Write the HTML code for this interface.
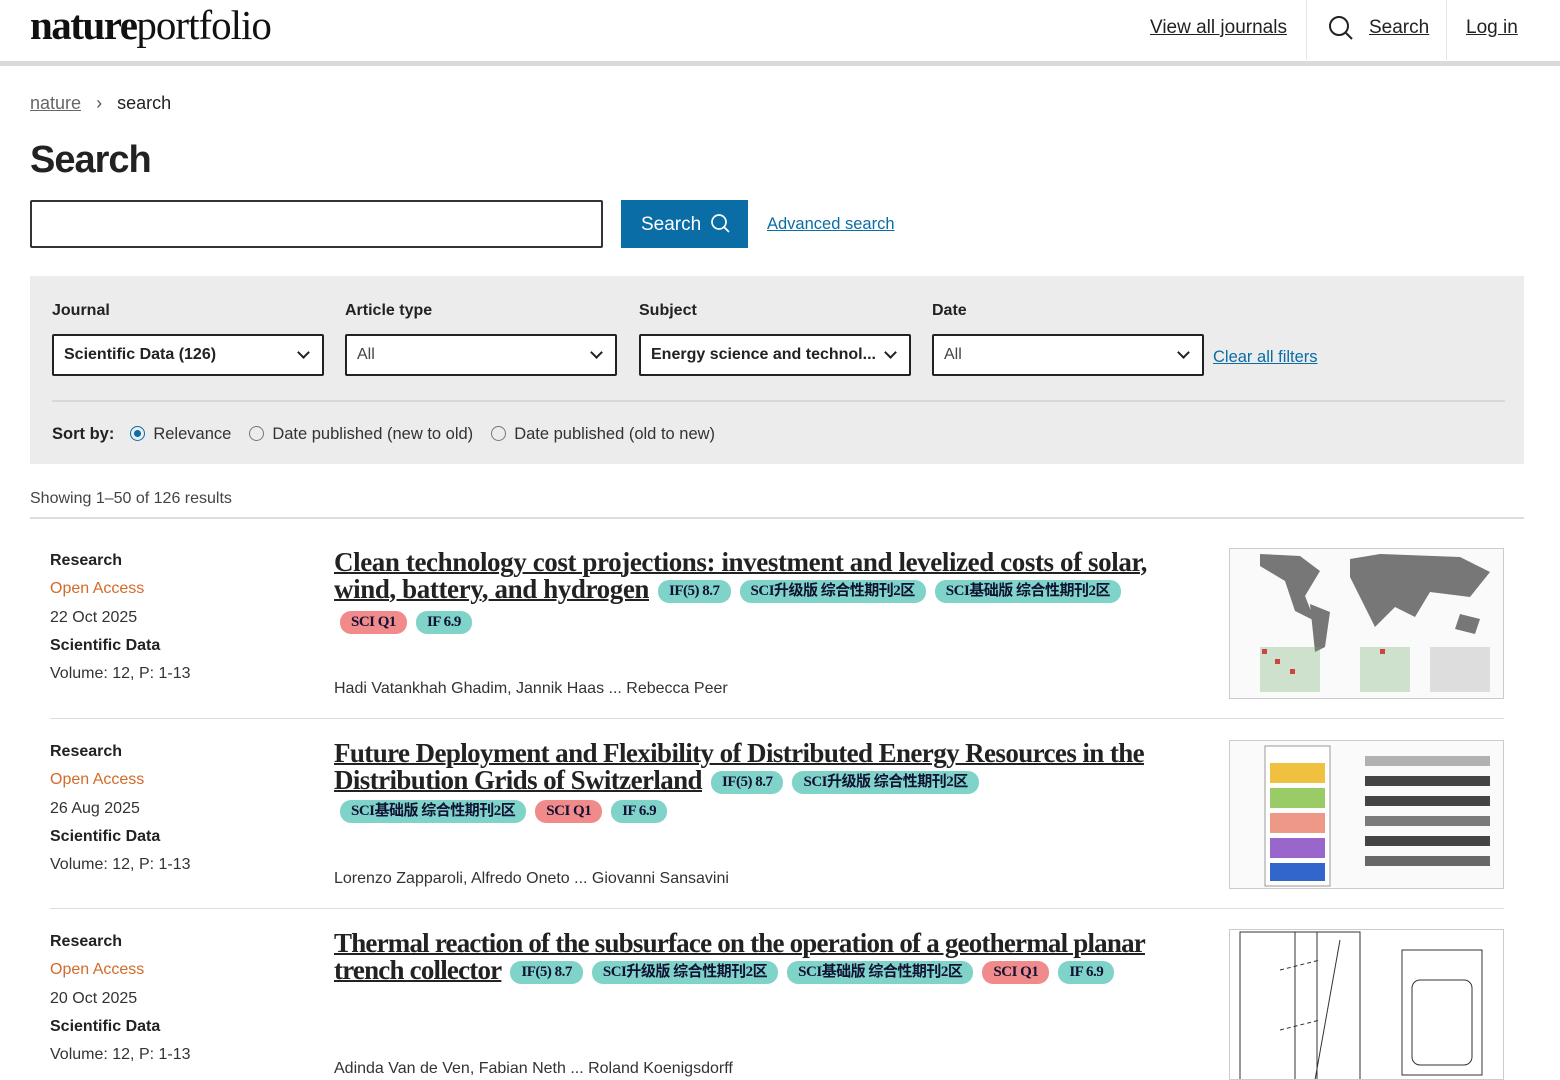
<!DOCTYPE html>
<html><head><meta charset="utf-8"><style>
*{margin:0;padding:0;box-sizing:border-box}
body{width:1560px;height:1080px;overflow:hidden;background:#fff;font-family:"Liberation Sans","Noto Sans CJK SC",sans-serif;color:#222;position:relative}
.a{position:absolute}
.hdr{height:66px;border-bottom:5px solid #dadada;top:0;left:0;width:1560px}
.logo{left:30px;top:1px;font-family:"Liberation Serif",serif;font-size:41px;letter-spacing:-1px;color:#111}
.nav{font-size:19px;color:#222;text-decoration:underline;top:17px}
.sel{height:42px;border:2px solid #222;border-radius:2px;background:#fff;font-size:16px;padding:10px 10px;top:334px}
.sel:after{content:"";position:absolute;right:14px;top:12px;width:7px;height:7px;border-right:2px solid #222;border-bottom:2px solid #222;transform:rotate(45deg)}
.lab{font-size:16px;font-weight:bold;top:302px}
.t{font-family:"Liberation Serif",serif;font-weight:bold;font-size:27px;letter-spacing:-0.4px;line-height:27px;color:#222;text-decoration:underline;text-decoration-thickness:2px;left:334px;width:830px}
.b{display:inline-block;font-family:"Liberation Serif","Noto Sans CJK SC",serif;font-weight:bold;font-size:15px;letter-spacing:-0.5px;padding:2px 11px;border-radius:11px;background:#7fd3c8;color:#113;text-decoration:none;vertical-align:3px;margin-left:9px;line-height:19px}
.r{background:#f18b8b}
.meta{left:50px;font-size:16px;line-height:28.3px;color:#333}
.meta b{color:#222}
.meta .oa{color:#d36a2a}
.au{left:334px;font-size:16px;color:#333}
.thumb{left:1229px;width:275px;border:1px solid #ccc;background:#fafafa;overflow:hidden}
.sep{left:50px;width:1454px;height:1px;background:#ddd}
.radio{display:inline-block;width:15px;height:15px;border:1px solid #777;border-radius:50%;vertical-align:-2px;margin-right:8px;position:relative}
</style></head><body>
<div class="a hdr"></div>
<div class="a logo"><b style="letter-spacing:-1.5px">nature</b>portfolio</div>
<div class="a nav" style="left:1150px">View all journals</div>
<div class="a" style="left:1306px;top:0;width:1px;height:60px;background:#e5e5e5"></div>
<svg class="a" style="left:1328px;top:15px" width="26" height="26" viewBox="0 0 26 26"><circle cx="11" cy="11" r="9" fill="none" stroke="#222" stroke-width="2"/><path d="M18 18l6 6" stroke="#222" stroke-width="2"/></svg>
<div class="a nav" style="left:1369px">Search</div>
<div class="a" style="left:1446px;top:0;width:1px;height:60px;background:#e5e5e5"></div>
<div class="a nav" style="left:1466px">Log in</div>
<div class="a" style="left:30px;top:93px;font-size:18px"><span style="color:#666;text-decoration:underline">nature</span> <span style="margin:0 10px;color:#555">›</span> search</div>
<div class="a" style="left:30px;top:139px;font-size:38px;font-weight:bold;letter-spacing:-1px">Search</div>
<div class="a" style="left:30px;top:200px;width:573px;height:48px;border:2px solid #333;border-radius:2px"></div>
<div class="a" style="left:621px;top:200px;width:127px;height:48px;background:#0a6da5;color:#fff;font-size:19px;padding:13px 0 0 20px">Search <svg width="20" height="20" viewBox="0 0 20 20" style="vertical-align:-3px;margin-left:4px"><circle cx="9" cy="9" r="7" fill="none" stroke="#fff" stroke-width="1.7"/><path d="M14 14l5 5" stroke="#fff" stroke-width="1.7"/></svg></div>
<div class="a" style="left:767px;top:215px;font-size:16.5px;color:#0a6da5;text-decoration:underline">Advanced search</div>
<div class="a" style="left:30px;top:276px;width:1494px;height:188px;background:#ececec"></div>
<div class="a lab" style="left:52px">Journal</div>
<div class="a lab" style="left:345px">Article type</div>
<div class="a lab" style="left:639px">Subject</div>
<div class="a lab" style="left:932px">Date</div>
<div class="a sel" style="left:52px;width:272px;font-weight:bold">Scientific Data (126)</div>
<div class="a sel" style="left:345px;width:272px;color:#444">All</div>
<div class="a sel" style="left:639px;width:272px;font-weight:bold">Energy science and technol...</div>
<div class="a sel" style="left:932px;width:272px;color:#444">All</div>
<div class="a" style="left:1213px;top:348px;font-size:16.5px;color:#0a6da5;text-decoration:underline">Clear all filters</div>
<div class="a" style="left:52px;top:400px;width:1453px;height:2px;background:#d8d8d8"></div>
<div class="a" style="left:52px;top:425px;font-size:16.5px;color:#333"><b style="color:#222;margin-right:16px">Sort by:</b><span class="radio" style="border-color:#0a6da5"><span style="position:absolute;left:3px;top:3px;width:7px;height:7px;border-radius:50%;background:#0a6da5"></span></span>Relevance<span style="margin-left:18px"></span><span class="radio"></span>Date published (new to old)<span style="margin-left:18px"></span><span class="radio"></span>Date published (old to new)</div>
<div class="a" style="left:30px;top:490px;font-size:16px;color:#444">Showing 1–50 of 126 results</div>
<div class="a" style="left:30px;top:517px;width:1494px;height:2px;background:#ddd"></div>

<div class="a meta" style="top:547px"><b>Research</b><br><span class="oa">Open Access</span><br>22 Oct 2025<br><b>Scientific Data</b><br>Volume: 12, P: 1-13</div>
<div class="a t" style="top:549px">Clean technology cost projections: investment and levelized costs of solar, wind, battery, and hydrogen<span class="b">IF(5) 8.7</span><span class="b">SCI升级版 综合性期刊2区</span><span class="b">SCI基础版 综合性期刊2区</span><br><span class="b r" style="margin-left:6px;margin-top:8px">SCI Q1</span><span class="b">IF 6.9</span></div>
<div class="a au" style="top:680px">Hadi Vatankhah Ghadim, Jannik Haas ... Rebecca Peer</div>
<div class="a thumb" style="top:548px;height:151px"><svg width="275" height="151"><path d="M30 5l40 2 20 15-15 25 10 25-20-10-10-30-25-15z M80 55l20 8-5 35-10 5z M120 10l30-5 80 3 30 15-20 25-40-5-15 25-20-10-20 20-15-30-10-20z M230 65l20 5-5 15-20-5z" fill="#777"/><g fill="#6a6"><rect x="30" y="98" width="60" height="45" opacity=".3"/><rect x="130" y="98" width="50" height="45" opacity=".3"/></g><g fill="#c44"><rect x="32" y="100" width="5" height="5"/><rect x="45" y="110" width="5" height="5"/><rect x="60" y="120" width="5" height="5"/><rect x="150" y="100" width="5" height="5"/></g><rect x="200" y="98" width="60" height="45" fill="#ddd"/></svg></div>
<div class="a sep" style="top:718px"></div>

<div class="a meta" style="top:738px"><b>Research</b><br><span class="oa">Open Access</span><br>26 Aug 2025<br><b>Scientific Data</b><br>Volume: 12, P: 1-13</div>
<div class="a t" style="top:740px;letter-spacing:-0.6px">Future Deployment and Flexibility of Distributed Energy Resources in the Distribution Grids of Switzerland<span class="b">IF(5) 8.7</span><span class="b">SCI升级版 综合性期刊2区</span><br><span class="b" style="margin-left:6px;margin-top:6px">SCI基础版 综合性期刊2区</span><span class="b r">SCI Q1</span><span class="b">IF 6.9</span></div>
<div class="a au" style="top:870px">Lorenzo Zapparoli, Alfredo Oneto ... Giovanni Sansavini</div>
<div class="a thumb" style="top:740px;height:149px"><svg width="275" height="149"><rect x="35" y="5" width="65" height="140" fill="#fff" stroke="#999"/><rect x="40" y="22" width="55" height="20" fill="#f0c040"/><rect x="40" y="47" width="55" height="20" fill="#9c6"/><rect x="40" y="72" width="55" height="20" fill="#e98"/><rect x="40" y="97" width="55" height="20" fill="#96c"/><rect x="40" y="122" width="55" height="18" fill="#36c"/><g fill="#444"><rect x="135" y="15" width="125" height="10" opacity=".4"/><rect x="135" y="35" width="125" height="10"/><rect x="135" y="55" width="125" height="10"/><rect x="135" y="75" width="125" height="10" opacity=".7"/><rect x="135" y="95" width="125" height="10"/><rect x="135" y="115" width="125" height="10" opacity=".8"/></g></svg></div>
<div class="a sep" style="top:908px"></div>

<div class="a meta" style="top:928px"><b>Research</b><br><span class="oa">Open Access</span><br>20 Oct 2025<br><b>Scientific Data</b><br>Volume: 12, P: 1-13</div>
<div class="a t" style="top:930px;letter-spacing:-0.8px;width:845px">Thermal reaction of the subsurface on the operation of a geothermal planar trench collector<span class="b">IF(5) 8.7</span><span class="b">SCI升级版 综合性期刊2区</span><span class="b">SCI基础版 综合性期刊2区</span><span class="b r">SCI Q1</span><span class="b">IF 6.9</span></div>
<div class="a au" style="top:1060px">Adinda Van de Ven, Fabian Neth ... Roland Koenigsdorff</div>
<div class="a thumb" style="top:929px;height:151px;background:#fff"><svg width="275" height="151" fill="none" stroke="#333"><rect x="10" y="2" width="120" height="148"/><rect x="65" y="2" width="22" height="148"/><path d="M110 10l-25 140"/><rect x="172" y="20" width="80" height="125"/><rect x="182" y="50" width="60" height="85" rx="8"/><path d="M50 40l40-10M50 100l40-10" stroke-dasharray="4 3"/></svg></div>
</body></html>
